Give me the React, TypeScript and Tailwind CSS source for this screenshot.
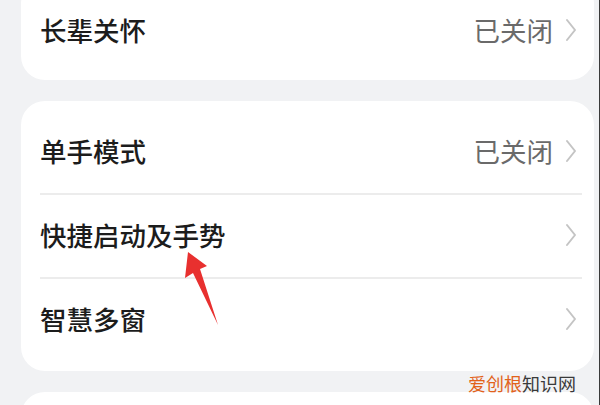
import React from "react";

const font = { fontFamily: '"Noto Sans CJK SC", "Noto Sans", sans-serif' };

function Chevron() {
  return (
    <svg width="12" height="24" viewBox="0 0 12 24" className="shrink-0">
      <path d="M2 2 L10 12 L2 22" fill="none" stroke="#c4c4c4" strokeWidth="2" strokeLinecap="round" strokeLinejoin="round" />
    </svg>
  );
}

function Row({ title, value, divider }: { title: string; value?: string; divider?: boolean }) {
  return (
    <div className="relative h-[84px] flex items-center pl-[19px] pr-[17px]">
      {divider && <div className="absolute top-0 left-[19px] right-[12px] h-[2px] bg-[#ececec]" />}
      <span className="flex-1 text-[26.5px] font-medium text-[#1c1c1c] leading-none">{title}</span>
      {value && <span className="text-[26.5px] text-[#6a6a6a] leading-none mr-[12px]">{value}</span>}
      <Chevron />
    </div>
  );
}

export default function App() {
  return (
    <div className="relative w-[600px] h-[405px] overflow-hidden bg-[#f1f2f4]" style={font}>
      <div className="flex flex-col gap-[21px] pl-[21px] pr-[6px] -mt-[20px]">
        <div className="bg-white rounded-[24px] py-2">
          <Row title="长辈关怀" value="已关闭" />
        </div>
        <div className="bg-white rounded-[24px] pt-2 pb-[10px]">
          <Row title="单手模式" value="已关闭" />
          <Row title="快捷启动及手势" divider />
          <Row title="智慧多窗" divider />
        </div>
        <div className="bg-white rounded-[24px] h-[80px]" />
      </div>
      <div className="absolute top-0 right-0 w-[1px] h-full bg-[#3a3a3a]" />
      <svg className="absolute left-0 top-0" width="600" height="405" viewBox="0 0 600 405">
        <polygon points="188,252 207,266 200,269 218,325 193,273 185,278" fill="#e8302f" />
      </svg>
      <div className="absolute left-[468px] top-[374px] text-[18px] leading-none tracking-[0px]">
        <span className="text-[#e2621b]">爱创根</span>
        <span className="text-[#3a3a3a]">知识网</span>
      </div>
    </div>
  );
}
